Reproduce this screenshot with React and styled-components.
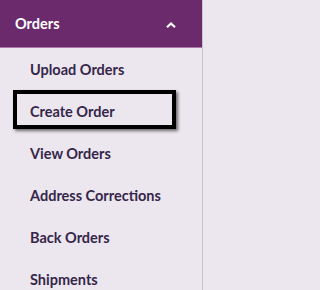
import React from 'react';
import styled, { createGlobalStyle } from 'styled-components';

const GlobalStyle = createGlobalStyle`
    html, body {
        margin: 0;
        padding: 0;
        background: #ece7ee;
    }
    body {
        font-family: Lato, "Open Sans", sans-serif;
    }
`;

const Sidebar = styled.nav`
    width: 202px;
    height: 290px;
    background: #ece7ee;
    border-right: 1px solid #c9c4cc;
    overflow: hidden;
`;

const SectionHeader = styled.div`
    height: 47px;
    display: flex;
    align-items: center;
    justify-content: space-between;
    padding: 0 25px 0 15px;
    background: #6a2a6c;
    border-bottom: 1px solid #a878a6;
    color: #ffffff;
    font-size: 14.5px;
    font-weight: 700;
`;

const Chevron = styled.svg`
    width: 12px;
    height: 8px;
    margin-top: 3px;
`;

const List = styled.ul`
    list-style: none;
    margin: 0;
    padding: 0;
`;

const Item = styled.li`
    height: 42px;
    display: flex;
    align-items: flex-start;
`;

const ItemLink = styled.a`
    display: flex;
    align-items: center;
    box-sizing: border-box;
    margin-left: 13px;
    width: 163px;
    height: 39px;
    padding: 3px 0 0 13px;
    border: 4px solid ${(p) => (p.$focused ? '#000' : 'transparent')};
    box-shadow: ${(p) => (p.$focused ? '2px 2px 3px rgba(0, 0, 0, 0.55)' : 'none')};
    color: #35264a;
    font-size: 14.5px;
    font-weight: 700;
    text-decoration: none;
    white-space: nowrap;
`;

const items = [
    'Upload Orders',
    'Create Order',
    'View Orders',
    'Address Corrections',
    'Back Orders',
    'Shipments',
];

export default function App() {
    return (
        <>
            <GlobalStyle />
            <Sidebar>
                <SectionHeader>
                    <span>Orders</span>
                    <Chevron viewBox="0 0 12 8">
                        <path d="M2 6.2 L6 2.4 L10 6.2" fill="none" stroke="#fff" strokeWidth="2.2" />
                    </Chevron>
                </SectionHeader>
                <List>
                    {items.map((label) => (
                        <Item key={label}>
                            <ItemLink href="#" $focused={label === 'Create Order'}>
                                {label}
                            </ItemLink>
                        </Item>
                    ))}
                </List>
            </Sidebar>
        </>
    );
}
